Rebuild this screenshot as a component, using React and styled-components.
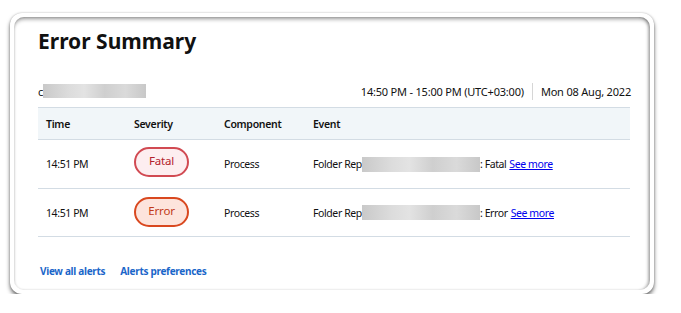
import React from "react";
import styled, { createGlobalStyle } from "styled-components";

const GlobalStyle = createGlobalStyle`
  html, body {
    margin: 0;
    padding: 0;
    background: #ffffff;
  }
  body {
    font-family: "Noto Sans", "Open Sans", sans-serif;
    color: #111;
  }
`;

const Page = styled.div`
  padding: 13px 0 0 10px;
`;

const Frame = styled.div`
  width: 644px;
  height: 281px;
  box-sizing: border-box;
  padding: 4px;
  border-radius: 12px;
  background: #fff;
  box-shadow: 0 3px 4px rgba(0, 0, 0, 0.55), 0 0 2px rgba(0, 0, 0, 0.25);
`;

const Card = styled.div`
  height: 100%;
  box-sizing: border-box;
  border-radius: 10px;
  padding: 10px 19px 0 24px;
  box-shadow: inset 0 4px 4px -2px rgba(0, 0, 0, 0.4),
    inset -3px 0 3px -1px rgba(0, 0, 0, 0.3),
    inset 1px 0 2px rgba(0, 0, 0, 0.1);
`;

const Title = styled.h1`
  margin: 0;
  font-size: 21px;
  line-height: 28px;
  font-weight: 700;
  color: #111;
`;

const MetaRow = styled.div`
  display: flex;
  align-items: center;
  justify-content: space-between;
  margin-top: 27px;
  height: 18px;
  font-size: 11px;
  letter-spacing: -0.2px;
`;

const Blur = styled.span`
  display: inline-block;
  width: ${(p) => p.w}px;
  height: ${(p) => p.h}px;
  vertical-align: middle;
  background: linear-gradient(
    90deg,
    #c9c9c9 0%,
    #dcdcdc 25%,
    #e3e3e3 40%,
    #cfcfcf 60%,
    #dadada 80%,
    #c8c8c8 100%
  );
`;

const Owner = styled.div`
  display: flex;
  align-items: center;
`;

const Range = styled.div`
  display: flex;
  align-items: center;
`;

const Divider = styled.span`
  width: 1px;
  height: 17px;
  background: #d6d6d6;
  margin: 0 8px;
`;

const Table = styled.div`
  margin-top: 7px;
  margin-right: 1px;
  border-top: 1px solid #d3dce4;
`;

const Row = styled.div`
  display: grid;
  grid-template-columns: 88px 90px 89px 1fr;
  align-items: center;
  height: ${(p) => p.h}px;
  background: ${(p) => (p.head ? "#f1f6f9" : "#fff")};
  border-bottom: 1px solid #d3dce4;
  font-size: 10.5px;
  letter-spacing: ${(p) => (p.head ? "-0.3px" : "-0.4px")};
  font-weight: ${(p) => (p.head ? 600 : 400)};
`;

const Cell = styled.div`
  padding-left: 8px;
  white-space: nowrap;
  display: flex;
  align-items: center;
`;

const Badge = styled.span`
  display: inline-flex;
  align-items: center;
  justify-content: center;
  box-sizing: border-box;
  width: 55px;
  height: 30px;
  margin-top: ${(p) => (p.kind === "fatal" ? "-4px" : "-1px")};
  border-radius: 15px;
  font-size: 11.5px;
  letter-spacing: -0.2px;
  border: 2px solid ${(p) => (p.kind === "fatal" ? "#d14a52" : "#d9481f")};
  background: ${(p) => (p.kind === "fatal" ? "#fdeef0" : "#fde4dc")};
  color: ${(p) => (p.kind === "fatal" ? "#b3222c" : "#c13a18")};
  padding-bottom: 3px;
`;

const SeeMore = styled.a`
  color: #0000ee;
  text-decoration: underline;
  margin-left: 3px;
  cursor: pointer;
`;

const Footer = styled.div`
  display: flex;
  gap: 15px;
  margin-top: 27px;
  padding-left: 2px;
`;

const FootLink = styled.a`
  color: #1a66c9;
  font-weight: 700;
  font-size: 10px;
  letter-spacing: -0.3px;
  cursor: pointer;
`;

const alerts = [
  { time: "14:51 PM", kind: "fatal", label: "Fatal", h: 48 },
  { time: "14:51 PM", kind: "error", label: "Error", h: 47 },
];

export default function App() {
  return (
    <>
      <GlobalStyle />
      <Page>
        <Frame>
          <Card>
            <Title>Error Summary</Title>
            <MetaRow>
              <Owner>
                <span>c</span>
                <Blur w={103} h={14} />
              </Owner>
              <Range>
                <span>14:50 PM - 15:00 PM (UTC+03:00)</span>
                <Divider />
                <span>Mon 08 Aug, 2022</span>
              </Range>
            </MetaRow>
            <Table>
              <Row head h={31}>
                <Cell>Time</Cell>
                <Cell>Severity</Cell>
                <Cell>Component</Cell>
                <Cell>Event</Cell>
              </Row>
              {alerts.map((a, i) => (
                <Row key={i} h={a.h}>
                  <Cell>{a.time}</Cell>
                  <Cell>
                    <Badge kind={a.kind}>{a.label}</Badge>
                  </Cell>
                  <Cell>Process</Cell>
                  <Cell>
                    Folder Rep
                    <Blur w={118} h={15} />: {a.label}
                    <SeeMore>See more</SeeMore>
                  </Cell>
                </Row>
              ))}
            </Table>
            <Footer>
              <FootLink>View all alerts</FootLink>
              <FootLink>Alerts preferences</FootLink>
            </Footer>
          </Card>
        </Frame>
      </Page>
    </>
  );
}
